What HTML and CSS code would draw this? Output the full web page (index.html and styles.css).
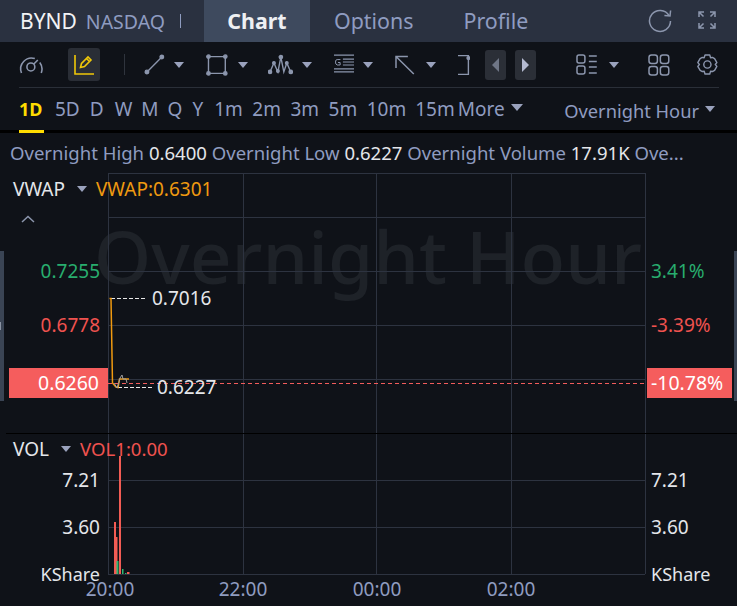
FILE: index.html
```html
<!DOCTYPE html>
<html lang="en">
<head>
<meta charset="utf-8">
<title>BYND Chart</title>
<link rel="stylesheet" href="styles.css">
</head>
<body>
<div class="app">
  <header class="topbar">
    <div class="symbol"><span class="ticker">BYND</span><span class="exchange">NASDAQ</span><span class="pipe"></span></div>
    <nav class="tabs">
      <span class="tab tab-active">Chart</span>
      <span class="tab">Options</span>
      <span class="tab tab-profile">Profile</span>
    </nav>
    <div class="top-actions">
      <svg class="ico-refresh" width="26" height="26" viewBox="0 0 26 26" fill="none" stroke="#8c96ad" stroke-width="1.5"><path d="M22 8.5A10.5 10.5 0 1 0 23.5 14"/><path d="M23.6 3.5 23 9l-5.6-.4"/></svg>
      <svg class="ico-full" width="20" height="20" viewBox="0 0 20 20" fill="none" stroke="#8c96ad" stroke-width="1.5"><path d="M2 7V2h5M2 2l4.5 4.5M18 7V2h-5M18 2l-4.5 4.5M2 13v5h5M2 18l4.5-4.5M18 13v5h-5M18 18l-4.5-4.5"/></svg>
    </div>
  </header>

  <div class="toolbar">
    <svg class="t-gauge" width="26" height="20" viewBox="0 0 26 20" fill="none" stroke="#8c96ad" stroke-width="1.6"><path d="M3.5 18A11 11 0 0 1 17 3.500"/><path d="M22 7.500A11 11 0 0 1 23.500 18"/><circle cx="13" cy="12" r="4"/><path d="m16 9 4-4"/></svg>
    <span class="t-active"><svg width="22" height="22" viewBox="0 0 22 22" fill="none" stroke="#f0c808" stroke-width="1.6"><path d="M2 1v19h19"/><path d="m7.500 13.500 1-4L15 3l3 3-6.500 6.500zM13.500 4.500l3 3"/></svg></span>
    <span class="t-divider"></span>
    <svg class="t-line" width="21" height="21" viewBox="0 0 21 21" fill="#8c96ad" stroke="#8c96ad" stroke-width="1.4"><path d="m3 18 15-15"/><circle cx="3" cy="18" r="1.800"/><circle cx="18" cy="3" r="1.800"/></svg>
    <i class="caret c1"></i>
    <svg class="t-rect" width="22" height="22" viewBox="0 0 22 22" fill="#8c96ad" stroke="#8c96ad" stroke-width="1.4"><path fill="none" d="M2.500 2.500h17v17h-17z"/><circle cx="2.500" cy="2.500" r="1.700"/><circle cx="19.500" cy="2.500" r="1.700"/><circle cx="2.500" cy="19.500" r="1.700"/><circle cx="19.500" cy="19.500" r="1.700"/></svg>
    <i class="caret c2"></i>
    <svg class="t-wave" width="25" height="21" viewBox="0 0 25 21" fill="#8c96ad" stroke="#8c96ad" stroke-width="1.400"><path fill="none" d="m2 18 4-9 4 9 3-15 3 15 3-9 4 9"/><circle cx="2" cy="18" r="1.700"/><circle cx="10" cy="17" r="1.300"/><circle cx="13" cy="3" r="1.700"/><circle cx="6" cy="9" r="1.300"/><circle cx="19" cy="9" r="1.300"/><circle cx="23" cy="18" r="1.700"/></svg>
    <i class="caret c3"></i>
    <svg class="t-fib" width="21" height="21" viewBox="0 0 21 21" fill="none" stroke="#8c96ad" stroke-width="1.200"><path d="M0 1h21M9 5h12M9 8h12M9 11h12M0 15h21M0 18h21"/><path stroke-width="1" d="M6.500 5.500H3.200q-1.700 0-1.700 2.500t1.700 3h3V8.500H4"/></svg>
    <i class="caret c4"></i>
    <svg class="t-arrow" width="20" height="20" viewBox="0 0 20 20" fill="none" stroke="#8c96ad" stroke-width="1.500"><path d="M1 1.500 19 19M1 13V1.500h12"/></svg>
    <i class="caret c5"></i>
    <svg class="t-bracket" width="12" height="22" viewBox="0 0 12 22" fill="none" stroke="#8c96ad" stroke-width="1.400"><path d="M0 1.500h10.500v19H0"/><circle cx="10.500" cy="4" r="1.400" fill="#8c96ad"/></svg>
    <span class="stepper step-prev"><i class="tri-left"></i></span>
    <span class="stepper step-next"><i class="tri-right"></i></span>
    <svg class="t-list" width="22" height="21" viewBox="0 0 22 21" fill="none" stroke="#8c96ad" stroke-width="1.500"><rect x="1" y="1" width="8" height="8" rx="2"/><rect x="1" y="12" width="8" height="8" rx="2"/><path d="M13 2h8M13 7.500h8M13 13h8M13 19h8"/></svg>
    <i class="caret c6"></i>
    <svg class="t-grid" width="22" height="22" viewBox="0 0 22 22" fill="none" stroke="#8c96ad" stroke-width="1.500"><rect x="1" y="1" width="8.500" height="8.500" rx="2.500"/><rect x="12.500" y="1" width="8.500" height="8.500" rx="2.500"/><rect x="1" y="12.500" width="8.500" height="8.500" rx="2.500"/><rect x="12.500" y="12.500" width="8.500" height="8.500" rx="2.500"/></svg>
    <svg class="t-gear" width="23" height="23" viewBox="0 0 24 24" fill="none" stroke="#8c96ad" stroke-width="1.500"><circle cx="12" cy="12" r="3.800"/><path d="M9.500 2h5l.8 2.800 2-.2 2.300 1.200 2.400 4.200-1.700 2 1.700 2-2.400 4.200-2.300 1.200-2-.2-.8 2.800h-5l-.8-2.800-2 .2-2.300-1.200L1.900 14l1.700-2-1.700-2 2.400-4.200 2.300-1.200 2 .2z" stroke-linejoin="round"/></svg>
  </div>

  <div class="periods">
    <span class="p p-active">1D</span>
    <span class="p p5d">5D</span>
    <span class="p pd">D</span>
    <span class="p pw">W</span>
    <span class="p pm">M</span>
    <span class="p pq">Q</span>
    <span class="p py">Y</span>
    <span class="p p1m">1m</span>
    <span class="p p2m">2m</span>
    <span class="p p3m">3m</span>
    <span class="p p5m">5m</span>
    <span class="p p10m">10m</span>
    <span class="p p15m">15m</span>
    <span class="p pmore">More</span>
    <i class="caret c-more"></i>
    <span class="session">Overnight Hour</span>
    <i class="caret c-session"></i>
  </div>

  <div class="stats">
    <span class="k">Overnight High</span> <span class="v">0.6400</span> <span class="k">Overnight Low</span> <span class="v">0.6227</span> <span class="k">Overnight Volume</span> <span class="v">17.91K</span> <span class="k">Ove...</span>
  </div>

  <div class="chart">
    <div class="watermark">Overnight Hour</div>

    <svg class="plot" width="737" height="436" viewBox="0 170 737 436">
      <g class="grid-lines">
        <path d="M108 173H645M108 217H645M108 271H645M108 325H645M108 379H645M108 480H645M108 527H645M108 574H645"/>
        <path d="M108.500 173V574M243.500 173V574M376.500 173V574M511.500 173V574M645.500 173V574"/>
      </g>
      <path class="sep" d="M6 433.500H737"/>
      <path class="price-line" d="M108 383.500H645"/>
      <path class="leader" d="M111 298.500H147M118 387.500H152"/>
      <path class="vwap" d="M109.500 298.500H111L112.500 383l3.500 4 2 .5 1.500-8.500H129"/>
      <path class="mini" d="M114 383l3 5 2-6 1-4 2-3 1 4h3l1 4"/>
      <g class="bars-red">
        <rect x="114" y="522" width="2" height="52"/>
        <rect x="116" y="537" width="1.500" height="37"/>
        <rect x="119" y="456" width="2" height="118"/>
        <rect x="127" y="572" width="2.500" height="2"/>
      </g>
      <g class="bars-green">
        <rect x="116.500" y="561" width="2" height="13"/>
        <rect x="122" y="569" width="1.500" height="5"/>
        <rect x="125" y="573" width="1.500" height="1"/>
      </g>
    </svg>

    <div class="side side-left"></div>
    <div class="side side-right"></div>

    <div class="legend legend-top"><span>VWAP</span><i class="caret c-legend"></i><span class="orange">VWAP:0.6301</span></div>
    <svg class="collapse" width="14" height="8" viewBox="0 0 14 8" fill="none" stroke="#8c96ad" stroke-width="1.500"><path d="m1 7 6-5.500L13 7"/></svg>
    <div class="legend legend-vol"><span>VOL</span><i class="caret c-legend"></i><span class="red vol-val">VOL1:0.00</span></div>

    <span class="lab lab-left green l-7255">0.7255</span>
    <span class="lab lab-left red l-6778">0.6778</span>
    <span class="tag tag-left">0.6260</span>
    <span class="lab white l-7016">0.7016</span>
    <span class="lab white l-6227">0.6227</span>

    <span class="lab green r-341">3.41%</span>
    <span class="lab red r-339">-3.39%</span>
    <span class="tag tag-right">-10.78%</span>

    <span class="lab lab-left white v-721">7.21</span>
    <span class="lab lab-left white v-360">3.60</span>
    <span class="lab lab-left white ks v-ks">KShare</span>
    <span class="lab white vr-721">7.21</span>
    <span class="lab white vr-360">3.60</span>
    <span class="lab white ks vr-ks">KShare</span>

    <span class="time t-20">20:00</span>
    <span class="time t-22">22:00</span>
    <span class="time t-00">00:00</span>
    <span class="time t-02">02:00</span>
  </div>
</div>
</body>
</html>
```

FILE: styles.css
```css
* { box-sizing: border-box; }
html, body { margin: 0; padding: 0; background: #0f1218; }
body { font-family: "Noto Sans", "Open Sans", sans-serif; color: #e4e6ea; overflow: hidden; }
.app { width: 737px; height: 606px; display: flex; flex-direction: column; }

.topbar { height: 42px; background: #2a3140; display: flex; align-items: stretch; flex: none; }
.symbol { width: 204px; display: flex; align-items: center; padding-left: 20px; }
.ticker { font-size: 21px; color: #f2f3f5; }
.exchange { font-size: 19.500px; color: #8f9cc0; margin-left: 9px; }
.pipe { width: 1px; height: 14px; background: #8f9cc0; margin-left: 15px; }
.tabs { display: flex; }
.tab { font-size: 21.400px; color: #8f9cc0; display: flex; align-items: center; padding: 0 24px 2px; }
.tab-profile { padding-left: 26px; }
.tab-active { background: #3e4a5e; color: #eef0f3; font-weight: 700; width: 106px; justify-content: center; padding: 0 0 2px; }
.top-actions { margin-left: auto; display: flex; align-items: center; padding: 0 20px 3px 0; }
.ico-refresh { margin-right: 1px; }
.ico-full { margin-left: 23px; }

.toolbar { height: 46px; margin: 0 18px 0 19px; border-bottom: 1px solid #2a2f38; display: flex; align-items: center; flex: none; }
.caret { display: block; width: 0; height: 0; border-left: 5px solid transparent; border-right: 5px solid transparent; border-top: 6px solid #9aa2bd; flex: none; }
.t-gauge { margin-left: -1px; }
.t-active { width: 33px; height: 33px; border-radius: 3px; background: #2a2e36; display: flex; align-items: center; justify-content: center; margin-left: 24px; }
.t-divider { width: 1px; height: 21px; background: #2f343d; margin-left: 24px; }
.t-line { margin-left: 19px; }
.c1 { margin-left: 9px; }
.t-rect { margin-left: 22px; }
.c2 { margin-left: 10px; }
.t-wave { margin-left: 20px; }
.c3 { margin-left: 9px; }
.t-fib { margin-left: 22px; }
.c4 { margin-left: 9px; }
.t-arrow { margin-left: 22px; }
.c5 { margin-left: 11px; }
.t-bracket { margin-left: 22px; }
.stepper { width: 21px; height: 30px; border-radius: 3px; background: #2b2f37; display: flex; align-items: center; justify-content: center; }
.step-prev { margin-left: 15px; }
.step-next { margin-left: 9px; }
.tri-left { width: 0; height: 0; border-top: 7px solid transparent; border-bottom: 7px solid transparent; border-right: 7px solid #6f7686; }
.tri-right { width: 0; height: 0; border-top: 7px solid transparent; border-bottom: 7px solid transparent; border-left: 7px solid #b4bad0; }
.t-list { margin-left: 40px; }
.c6 { margin-left: 12px; }
.t-grid { margin-left: 29px; }
.t-gear { margin-left: 26px; }

.periods { padding-left: 19px; display: flex; align-items: center; flex: none; border-bottom: 3px solid #000; height: 45px; position: relative; }
.p { font-size: 19px; color: #8f9cc0; line-height: 42px; height: 42px; }
.p-active { color: #ffdc00; font-weight: 700; font-size: 18px; width: 25px; position: relative; }
.p-active::after { content: ""; position: absolute; left: 0; right: 0; bottom: -3px; height: 3px; background: #ffdc00; }
.p5d { margin-left: 11px; }
.pd { margin-left: 10px; }
.pw { margin-left: 11px; }
.pm { margin-left: 9px; }
.pq { margin-left: 9px; }
.py { margin-left: 10px; }
.p1m { margin-left: 11px; }
.p2m { margin-left: 9.500px; }
.p3m { margin-left: 9.500px; }
.p5m { margin-left: 9.500px; }
.p10m { margin-left: 9.500px; }
.p15m { margin-left: 9px; }
.pmore { margin-left: 3px; }
.c-more { margin-left: 6px; border-left-width: 6px; border-right-width: 6px; border-top-width: 7px; margin-top: -4px; }
.session { margin-left: auto; font-size: 18.300px; color: #8f9cc0; margin-top: 3px; }
.c-session { margin-left: 6px; margin-right: 22px; margin-top: 0; }

.stats { height: 37px; padding-left: 10px; font-size: 18.560px; line-height: 39px; white-space: nowrap; flex: none; }
.k { color: #8f9cc0; }
.v { color: #e4e6ea; }

.chart { position: relative; flex: 1; }
.plot { position: absolute; left: 0; top: 0; display: block; }
.grid-lines path { stroke: #2d3340; stroke-width: 1; fill: none; shape-rendering: crispEdges; }
.sep { stroke: #000; stroke-width: 1; shape-rendering: crispEdges; }
.price-line { stroke: #f25c5c; stroke-width: 1; stroke-dasharray: 4 3; }
.leader { stroke: #e8e8e8; stroke-width: 1; stroke-dasharray: 4 2; fill: none; }
.mini { stroke: #a0a0a0; stroke-width: 1; fill: none; }
.vwap { stroke: #f09a10; stroke-width: 1.500; fill: none; }
.bars-red rect { fill: #f25c54; }
.bars-green rect { fill: #2eb872; }

.watermark { position: absolute; left: 94px; top: 46px; font-size: 73px; font-weight: 500; line-height: 80px; color: #1e2228; white-space: nowrap; }
.side { position: absolute; top: 81px; height: 150px; background: #3a4454; }
.side-left { left: 0; width: 4px; }
.side-left::after { content: ""; position: absolute; left: 0; top: 71px; width: 1px; height: 8px; background: #8a93a3; }
.side-right { right: 0; width: 3px; }

.legend { position: absolute; left: 13px; display: flex; align-items: center; font-size: 19px; line-height: 24px; color: #e4e6ea; white-space: nowrap; }
.legend-top { top: 7px; }
.legend-vol { top: 267px; }
.c-legend { margin: 0 9px 0 12px; border-top-width: 6px; }
.vol-val { font-size: 18.600px; }
.orange { color: #f09a10; }
.red { color: #f0524f; }
.green { color: #28ad6e; }
.white { color: #e4e6ea; }
.collapse { position: absolute; left: 21px; top: 45px; }

.lab { position: absolute; font-size: 19px; line-height: 24px; white-space: nowrap; }
.ks { font-size: 18px; }
.lab-left { right: 637px; }
.l-7255 { top: 89px; }
.l-6778 { top: 143px; }
.l-7016 { left: 152px; top: 116px; }
.l-6227 { left: 157px; top: 205px; }
.r-341 { left: 651px; top: 89px; }
.r-339 { left: 651px; top: 143px; }
.v-721 { top: 298px; }
.v-360 { top: 345px; }
.v-ks { top: 392px; }
.vr-721 { left: 651px; top: 298px; }
.vr-360 { left: 651px; top: 345px; }
.vr-ks { left: 651px; top: 392px; }

.tag { position: absolute; top: 198px; height: 30px; line-height: 30px; background: #f55d5d; color: #fff; font-size: 19.500px; white-space: nowrap; }
.tag-left { left: 9px; width: 99px; text-align: right; padding-right: 9px; }
.tag-right { left: 647px; width: 85px; padding-left: 4px; }

.time { position: absolute; top: 407px; font-size: 19px; line-height: 24px; color: #8f9cc0; transform: translateX(-50%); }
.t-20 { left: 110px; }
.t-22 { left: 243px; }
.t-00 { left: 377px; }
.t-02 { left: 511px; }
```
